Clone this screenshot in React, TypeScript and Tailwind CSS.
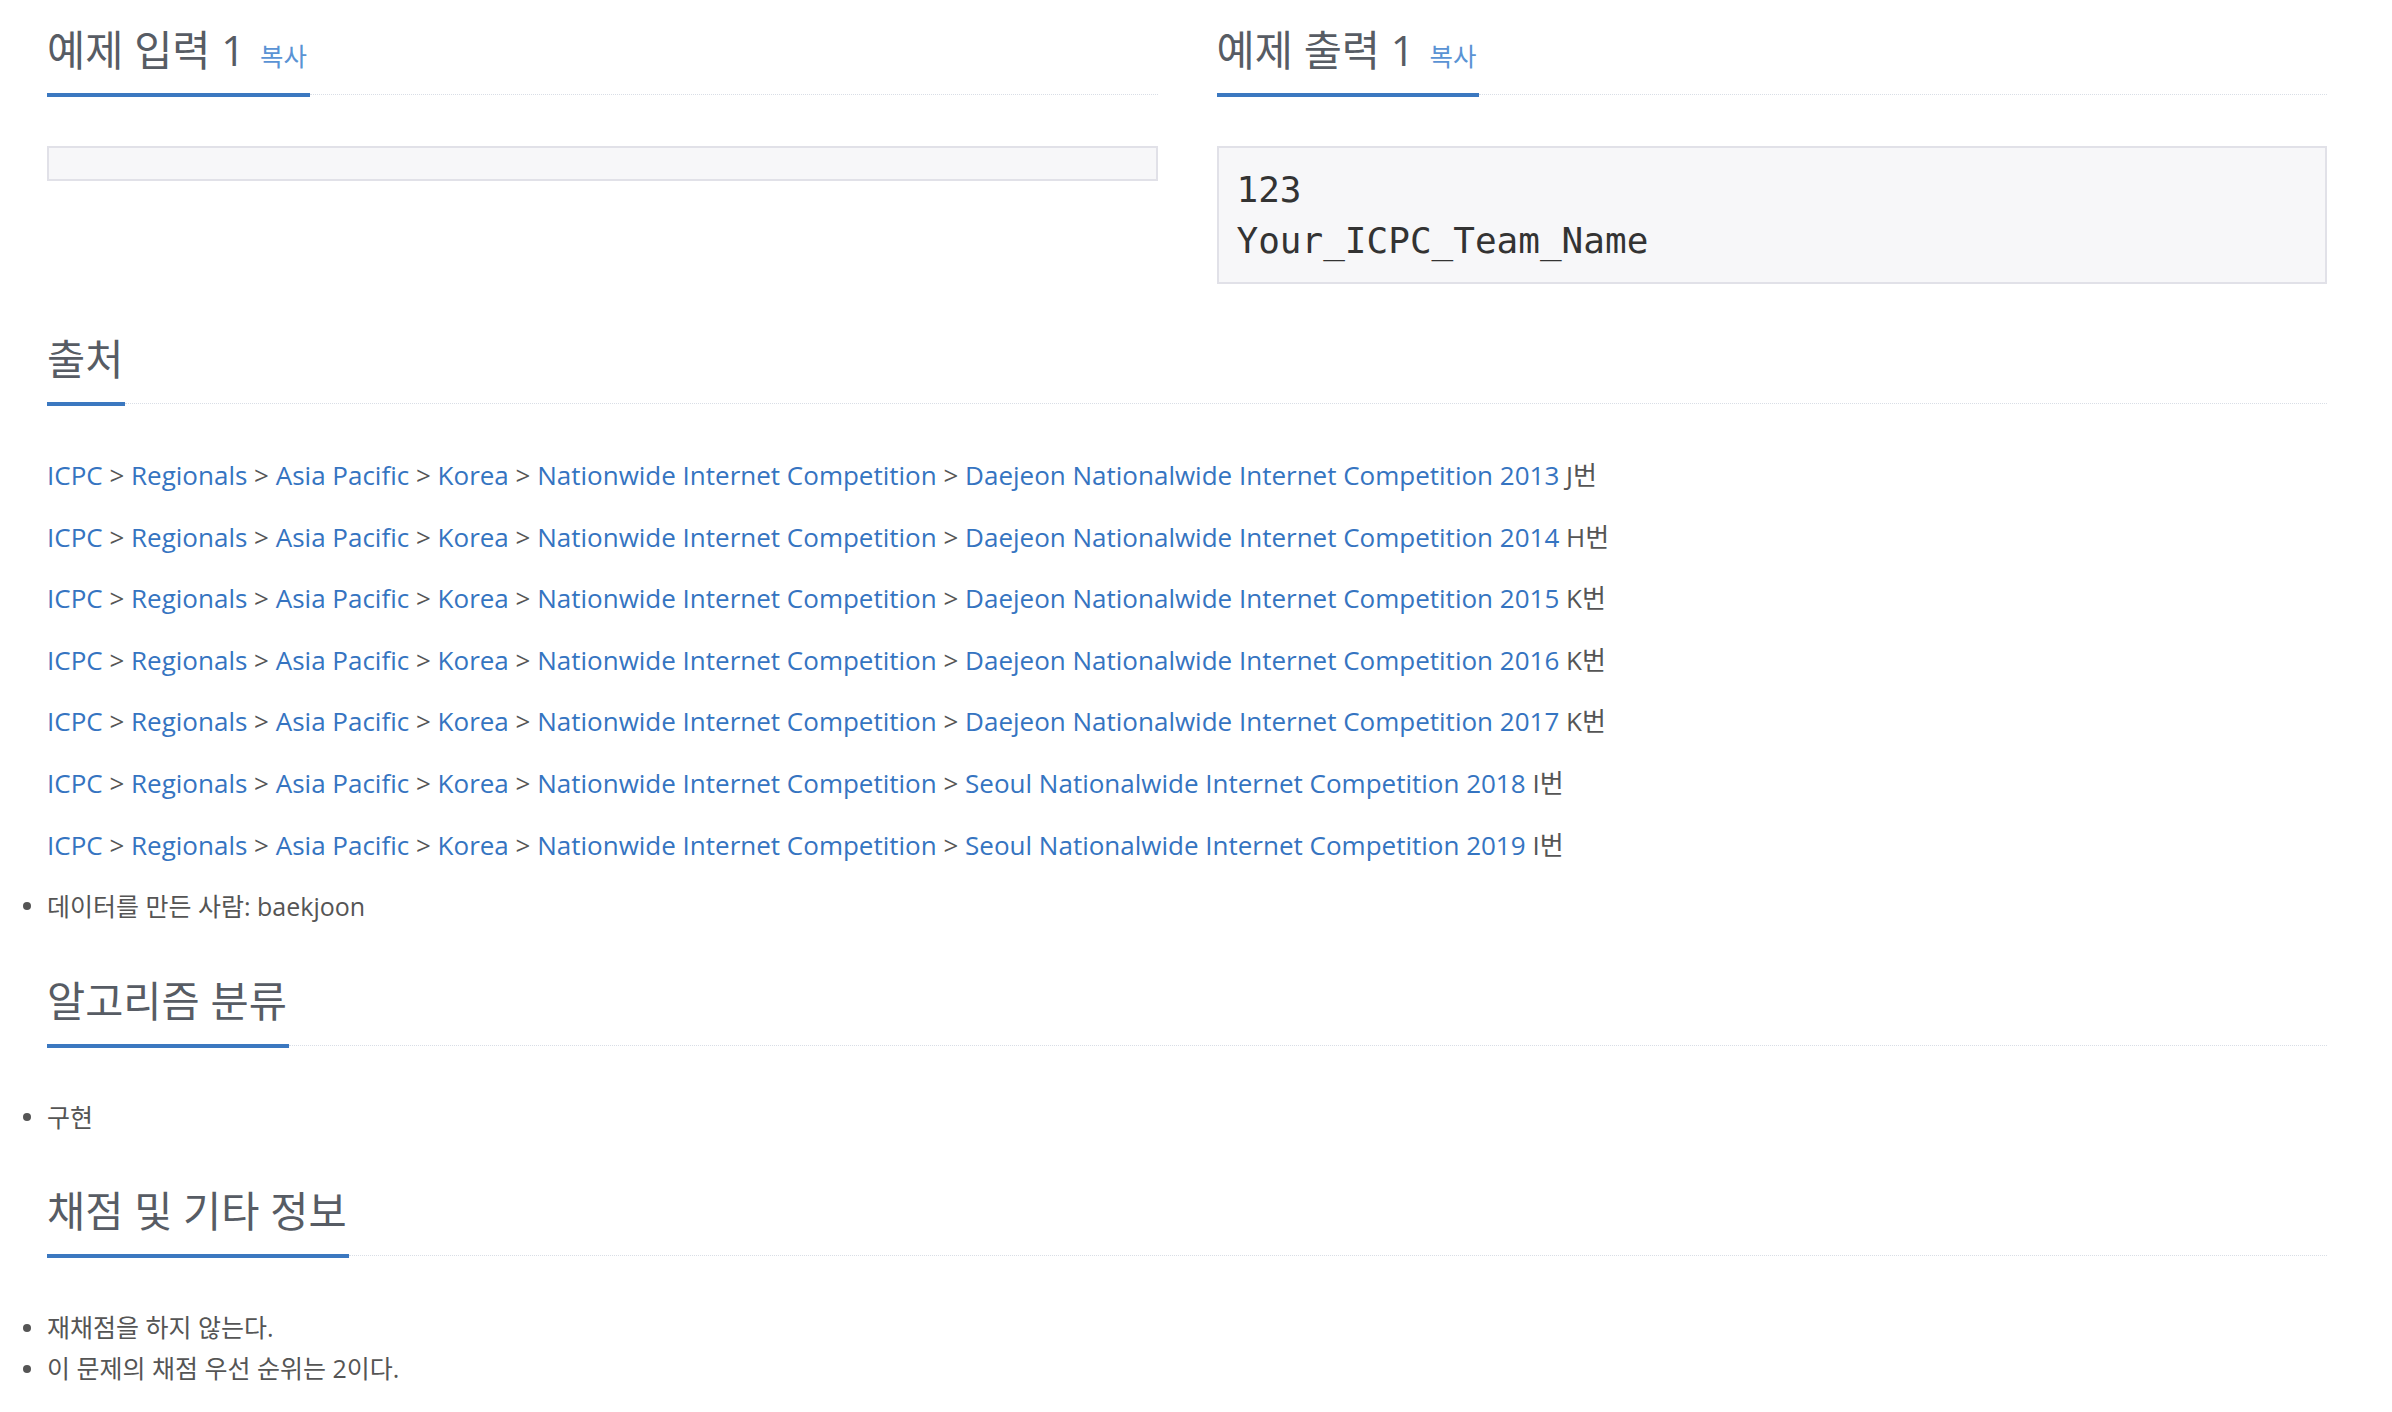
import React from 'react';

const sources = [
  { last: 'Daejeon Nationalwide Internet Competition 2013', no: 'J번' },
  { last: 'Daejeon Nationalwide Internet Competition 2014', no: 'H번' },
  { last: 'Daejeon Nationalwide Internet Competition 2015', no: 'K번' },
  { last: 'Daejeon Nationalwide Internet Competition 2016', no: 'K번' },
  { last: 'Daejeon Nationalwide Internet Competition 2017', no: 'K번' },
  { last: 'Seoul Nationalwide Internet Competition 2018', no: 'I번' },
  { last: 'Seoul Nationalwide Internet Competition 2019', no: 'I번' },
];

const path = ['ICPC', 'Regionals', 'Asia Pacific', 'Korea', 'Nationwide Internet Competition'];

const Headline = ({ title, copy }: { title: string; copy?: boolean }) => (
  <div className="flex items-end">
    <h2 className={`h-[72px] border-b-4 border-[#3b78c0] pt-[3px] text-[41.5px] leading-[44px] text-[#575c64] ${copy ? 'pr-[3px]' : 'pr-[2px]'}`}>
      {title}
      {copy && <a href="#" className="ml-[15px] text-[25.5px] text-[#5a93d4]">복사</a>}
    </h2>
    <div className="mb-[2px] flex-1 border-b border-dotted border-[#d9dee6]" />
  </div>
);

const Bullet = ({ children }: { children: React.ReactNode }) => (
  <li className="-ml-[24px] flex items-center">
    <span className="mr-[16px] h-[8px] w-[8px] rounded-full bg-[#555]" />
    <span>{children}</span>
  </li>
);

export default function App() {
  return (
    <div className="min-h-screen bg-white font-['Open_Sans','Noto_Sans_CJK_KR',sans-serif] text-[#555]">
      <div className="ml-[47px] w-[2280px] pt-[25px]">
        <div className="grid grid-cols-2 gap-[59px]">
          <div>
            <Headline title="예제 입력 1" copy />
            <pre className="mt-[49px] h-[35px] border-2 border-[#e1e1e8] bg-[#f7f7f9]" />
          </div>
          <div>
            <Headline title="예제 출력 1" copy />
            <pre className="mt-[49px] border-2 border-[#e1e1e8] bg-[#f7f7f9] px-[18px] py-[16px] font-['DejaVu_Sans_Mono',monospace] text-[36px] leading-[51px] text-[#333]">
              {'123\nYour_ICPC_Team_Name'}
            </pre>
          </div>
        </div>

        <section className="mt-[50px]">
          <Headline title="출처" />
          <div className="mt-[49px] flex flex-col gap-[21.6px] text-[26px] leading-[40px]">
            {sources.map((s) => (
              <p key={s.last}>
                {path.map((p) => (
                  <React.Fragment key={p}>
                    <a href="#" className="text-[#3574c1]">{p}</a>
                    {' > '}
                  </React.Fragment>
                ))}
                <a href="#" className="text-[#3574c1]">{s.last}</a> {s.no}
              </p>
            ))}
            <ul className="text-[25px]">
              <Bullet>데이터를 만든 사람: baekjoon</Bullet>
            </ul>
          </div>
        </section>

        <section className="mt-[50px]">
          <Headline title="알고리즘 분류" />
          <ul className="mt-[49px] text-[25px] leading-[40px]">
            <Bullet>구현</Bullet>
          </ul>
        </section>

        <section className="mt-[49px]">
          <Headline title="채점 및 기타 정보" />
          <ul className="mt-[49px] text-[25px] leading-[41px]">
            <Bullet>재채점을 하지 않는다.</Bullet>
            <Bullet>이 문제의 채점 우선 순위는 2이다.</Bullet>
          </ul>
        </section>
      </div>
    </div>
  );
}
